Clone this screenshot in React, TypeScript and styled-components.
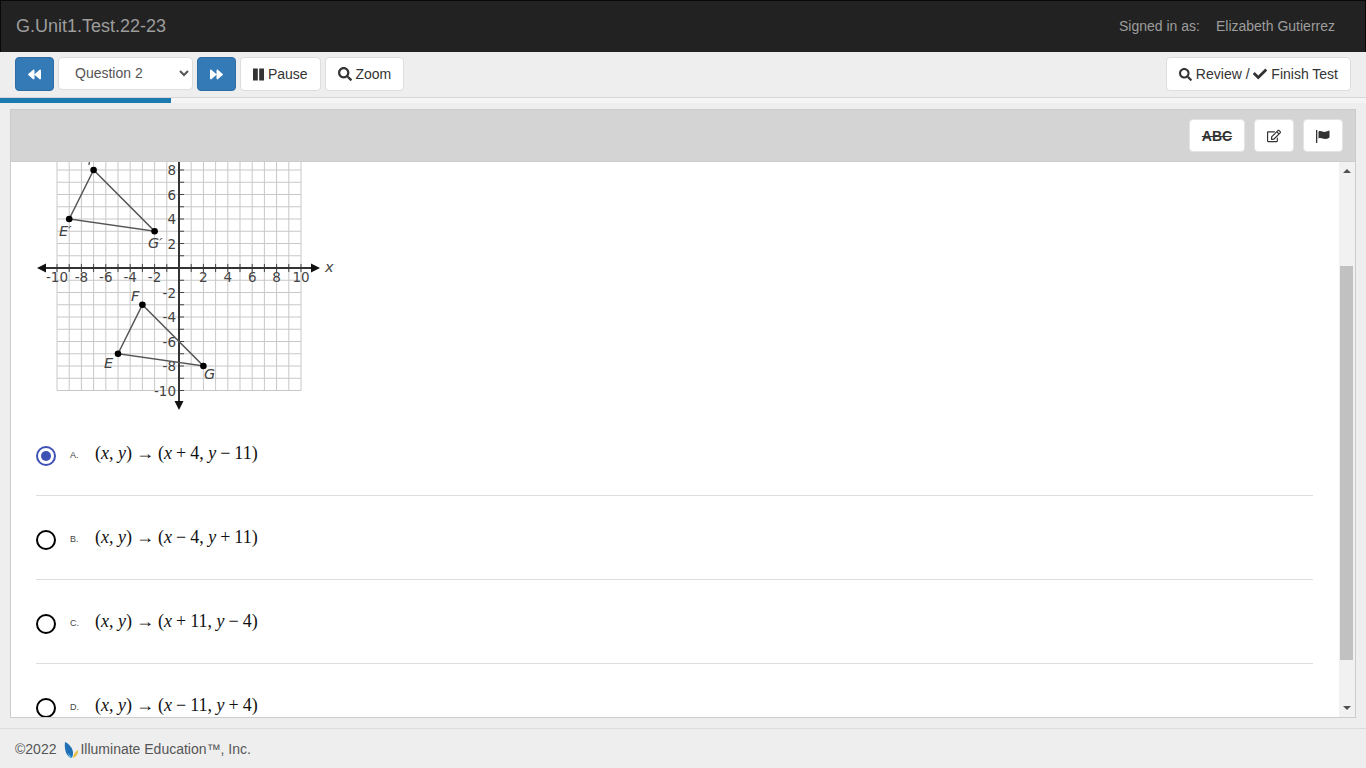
import styled, { createGlobalStyle } from "styled-components";
import { FaBackward, FaCheck, FaForward, FaRegEdit, FaSearch } from "react-icons/fa";

const GlobalStyle = createGlobalStyle`
  html, body { margin: 0; padding: 0; height: 100%; overflow: hidden; }
  body {
    background: #eeeeee;
    color: #333;
    font-family: "Liberation Sans", Arial, sans-serif;
    font-size: 14px;
  }
  * { box-sizing: border-box; }
  svg { vertical-align: -2px; }
`;

const Page = styled.div`
  height: 100vh;
  display: flex;
  flex-direction: column;
`;

const Navbar = styled.header`
  height: 52px;
  flex: none;
  background: #222;
  border: 1px solid #080808;
  border-bottom: none;
  display: flex;
  align-items: center;
  justify-content: space-between;
  padding: 0 30px 0 15px;
  color: #9d9d9d;
`;

const Brand = styled.div`
  font-size: 18px;
`;

const UserInfo = styled.div`
  display: flex;
  gap: 16px;
  margin-bottom: 2px;
`;

const Toolbar = styled.div`
  height: 46px;
  flex: none;
  display: flex;
  align-items: flex-start;
  justify-content: space-between;
  padding: 5px 15px 0;
  border-bottom: 1px solid #d6d6d6;
`;

const ButtonGroup = styled.div`
  display: flex;
  gap: 4px;
`;

const Button = styled.button<{ $primary?: boolean }>`
  height: 34px;
  padding: 0 12px;
  display: inline-block;
  border-radius: 4px;
  border: 1px solid ${(p) => (p.$primary ? "#2e6da4" : "#ddd")};
  background: ${(p) => (p.$primary ? "#337ab7" : "#fff")};
  color: ${(p) => (p.$primary ? "#fff" : "#333")};
  font-family: inherit;
  font-size: 14px;
  white-space: nowrap;
`;

const NavButton = styled(Button)`
  width: 39px;
  padding: 0;
`;

const QuestionSelect = styled.select`
  width: 135px;
  height: 33px;
  padding: 0 12px 2px;
  border: 1px solid #ddd;
  border-radius: 4px;
  background: #fff;
  color: #555;
  font-family: inherit;
  font-size: 14px;
`;

const Progress = styled.div`
  height: 5px;
  flex: none;
  background: #f5f5f5;
`;

const ProgressFill = styled.div`
  height: 100%;
  background: #1b7bb0;
`;

const Panel = styled.section`
  flex: 1;
  min-height: 0;
  margin: 6px 10px 10px;
  border: 1px solid #ccc;
  background: #fff;
  display: flex;
  flex-direction: column;
`;

const PanelHeader = styled.div`
  height: 52px;
  flex: none;
  background: #d4d4d4;
  border-bottom: 1px solid #ccc;
  display: flex;
  align-items: center;
  justify-content: flex-end;
  gap: 9px;
  padding: 0 12px 0 0;
`;

const ToolButton = styled(Button)<{ $w: number }>`
  width: ${(p) => p.$w}px;
  height: 33px;
  padding: 0;
  border-color: #e4e4e4;
`;

const Strike = styled.span`
  font-weight: 700;
  text-decoration: line-through;
`;

const PanelBody = styled.div`
  flex: 1;
  min-height: 0;
  display: flex;
`;

const Content = styled.div`
  flex: 1;
  min-width: 0;
  overflow: hidden;
  padding: 0 26px 0 25px;
`;

const Figure = styled.svg`
  display: block;
  width: 310px;
  height: 250px;
`;

const Option = styled.div`
  height: 84px;
  flex: none;
  display: flex;
  align-items: center;
  border-bottom: 1px solid #ddd;
  &:last-child {
    border-bottom: none;
  }
`;

const Radio = styled.span<{ $checked?: boolean }>`
  width: 20px;
  height: 20px;
  margin-top: 4px;
  flex: none;
  border-radius: 50%;
  border: 2.5px solid ${(p) => (p.$checked ? "#3f51b5" : "#000")};
  display: flex;
  align-items: center;
  justify-content: center;
  &::after {
    content: "";
    width: 10px;
    height: 10px;
    border-radius: 50%;
    background: ${(p) => (p.$checked ? "#3f51b5" : "transparent")};
  }
`;

const Letter = styled.span`
  width: 25px;
  margin-left: 14px;
  margin-top: 2px;
  font-size: 9px;
  color: #444;
`;

const Formula = styled.span`
  font-family: "Liberation Serif", "Times New Roman", serif;
  font-size: 18px;
  color: #111;
  white-space: pre;
  margin-bottom: 1px;
`;

const Op = styled.span`
  margin: 0 4px;
`;

const Scrollbar = styled.div`
  width: 16px;
  flex: none;
  background: #f1f1f1;
  position: relative;
  display: flex;
  flex-direction: column;
  align-items: center;
  justify-content: space-between;
  padding: 7px 0;
`;

const ScrollThumb = styled.div`
  position: absolute;
  top: 104px;
  left: 1px;
  width: 13px;
  height: 394px;
  background: #c1c1c1;
`;

const Arrow = styled.span<{ $down?: boolean }>`
  width: 0;
  height: 0;
  border-left: 4px solid transparent;
  border-right: 4px solid transparent;
  ${(p) => (p.$down ? "border-top: 4px solid #505050;" : "border-bottom: 4px solid #505050;")}
`;

const Footer = styled.footer`
  height: 40px;
  flex: none;
  border-top: 1px solid #ddd;
  padding: 1px 15px 0;
  display: flex;
  align-items: center;
  color: #555;
`;

const Logo = styled.svg`
  width: 16px;
  height: 16px;
  margin: 1px 1px 0 7px;
`;

const cx = (v: number) => 179 + v * 12.2;
const cy = (v: number) => 268 - v * 12.25;
const range = (a: number, b: number) => Array.from({ length: b - a + 1 }, (_, i) => a + i);

function PauseIcon() {
  return (
    <svg width="11" height="13" viewBox="0 0 11 13">
      <rect x="0" y="0.500" width="4.800" height="12" fill="#333" />
      <rect x="6.200" y="0.500" width="4.800" height="12" fill="#333" />
    </svg>
  );
}

function FlagIcon() {
  return (
    <svg width="14" height="13" viewBox="0 0 14 13">
      <rect x="0" y="0" width="1.300" height="13" fill="#333" />
      <path d="M2.500 1.500c2.500-1.400 4.500 1 7 .3 1.500-.4 3-1 4-1.300v7c-1.500 1-3 1.500-4.500 1.500-2.300 0-4-1.600-6.500-.5z" fill="#333" />
    </svg>
  );
}

function Graph() {
  const ticks = [-10, -8, -6, -4, -2, 2, 4, 6, 8, 10];
  const labelStyle = { fontFamily: '"DejaVu Sans", Verdana, sans-serif', fontSize: 13.5, fill: "#444" };
  const nameStyle = { ...labelStyle, fontStyle: "italic" as const, fontSize: 14.5 };
  return (
    <Figure viewBox="36 162 310 250">
      {range(-10, 10).map((v) => (
        <g key={v} stroke="#c8c8c8" strokeWidth="1">
          <line x1={cx(v)} y1={cy(10)} x2={cx(v)} y2={cy(-10)} />
          <line x1={cx(-10)} y1={cy(v)} x2={cx(10)} y2={cy(v)} />
        </g>
      ))}
      {range(-10, 10).map((v) => (
        <g key={v} stroke="#444" strokeWidth="1">
          <line x1={cx(v)} y1={264} x2={cx(v)} y2={272} />
          <line x1={179} y1={cy(v)} x2={184} y2={cy(v)} />
        </g>
      ))}
      <line x1={42} y1={268} x2={316} y2={268} stroke="#333" strokeWidth="2" />
      <line x1={179} y1={150} x2={179} y2={404} stroke="#333" strokeWidth="2" />
      <polygon points="37,268 46,263.5 46,272.5" fill="#111" />
      <polygon points="320,268 311,263.5 311,272.5" fill="#111" />
      <polygon points="179,410 174.500,401 183.500,401" fill="#111" />
      {ticks.map((v) => (
        <text key={v} x={cx(v)} y={282} textAnchor="middle" style={labelStyle}>
          {v}
        </text>
      ))}
      {ticks.filter((v) => v < 10).map((v) => (
        <text key={v} x={176} y={cy(v) + 5} textAnchor="end" style={labelStyle}>
          {v}
        </text>
      ))}
      <text x={325} y={272} style={nameStyle}>x</text>
      <g stroke="#555" strokeWidth="1.5" fill="none">
        <polygon points={`${cx(-9)},${cy(4)} ${cx(-7)},${cy(8)} ${cx(-2)},${cy(3)}`} />
        <polygon points={`${cx(-5)},${cy(-7)} ${cx(-3)},${cy(-3)} ${cx(2)},${cy(-8)}`} />
      </g>
      {[[-9, 4], [-7, 8], [-2, 3], [-5, -7], [-3, -3], [2, -8]].map(([x, y]) => (
        <circle key={`${x}${y}`} cx={cx(x)} cy={cy(y)} r="3.3" fill="#000" />
      ))}
      {/* the F' label is scrolled away, only the foot of its prime shows */}
      <line x1={89.5} y1={162} x2={88.8} y2={165} stroke="#444" strokeWidth="1.2" />
      <text x={59} y={236} style={nameStyle}>E′</text>
      <text x={148} y={248} style={nameStyle}>G′</text>
      <text x={131} y={301} style={nameStyle}>F</text>
      <text x={104} y={368} style={nameStyle}>E</text>
      <text x={204} y={379} style={nameStyle}>G</text>
    </Figure>
  );
}

const answers = [
  { letter: "A.", xOp: "+", xNum: "4", yOp: "−", yNum: "11", checked: true },
  { letter: "B.", xOp: "−", xNum: "4", yOp: "+", yNum: "11" },
  { letter: "C.", xOp: "+", xNum: "11", yOp: "−", yNum: "4" },
  { letter: "D.", xOp: "−", xNum: "11", yOp: "+", yNum: "4" },
];

export default function App() {
  return (
    <Page>
      <GlobalStyle />
      <Navbar>
        <Brand>G.Unit1.Test.22-23</Brand>
        <UserInfo>
          <span>Signed in as:</span>
          <span>Elizabeth Gutierrez</span>
        </UserInfo>
      </Navbar>
      <Toolbar>
        <ButtonGroup>
          <NavButton $primary><FaBackward size={13} /></NavButton>
          <QuestionSelect defaultValue="2">
            <option value="1">Question 1</option>
            <option value="2">Question 2</option>
            <option value="3">Question 3</option>
          </QuestionSelect>
          <NavButton $primary><FaForward size={13} /></NavButton>
          <Button><PauseIcon /> Pause</Button>
          <Button><FaSearch size={14} /> Zoom</Button>
        </ButtonGroup>
        <Button>
          <FaSearch size={13} /> Review / <FaCheck size={14} /> Finish Test
        </Button>
      </Toolbar>
      <Progress>
        <ProgressFill style={{ width: `${(171 / 1366) * 100}%` }} />
      </Progress>
      <Panel>
        <PanelHeader>
          <ToolButton $w={56}><Strike>ABC</Strike></ToolButton>
          <ToolButton $w={40}><FaRegEdit size={14} /></ToolButton>
          <ToolButton $w={40}><FlagIcon /></ToolButton>
        </PanelHeader>
        <PanelBody>
          <Content>
            <Graph />
            {answers.map((item) => (
              <Option key={item.letter}>
                <Radio $checked={item.checked} />
                <Letter>{item.letter}</Letter>
                <Formula>
                  (<i>x</i>, <i>y</i>)<Op>→</Op>(<i>x</i>
                  <Op>{item.xOp}</Op>
                  {item.xNum}, <i>y</i>
                  <Op>{item.yOp}</Op>
                  {item.yNum})
                </Formula>
              </Option>
            ))}
          </Content>
          <Scrollbar>
            <Arrow />
            <ScrollThumb />
            <Arrow $down />
          </Scrollbar>
        </PanelBody>
      </Panel>
      <Footer>
        ©2022
        <Logo viewBox="0 0 16 16">
          <path d="M2 0c4 2 8 6 8 11 0 2-.5 4-1.500 5C4 15 1 9 2 0z" fill="#1f6fb5" />
          <path d="M5 11c1.500 2 3 3 4.500 5C6.500 16 5.500 14 5 11z" fill="#5db5e6" />
          <path d="M15 8c.5 3-1.500 7-5 8 0-3 2-6.500 5-8z" fill="#e8c04a" />
        </Logo>
        Illuminate Education™, Inc.
      </Footer>
    </Page>
  );
}
